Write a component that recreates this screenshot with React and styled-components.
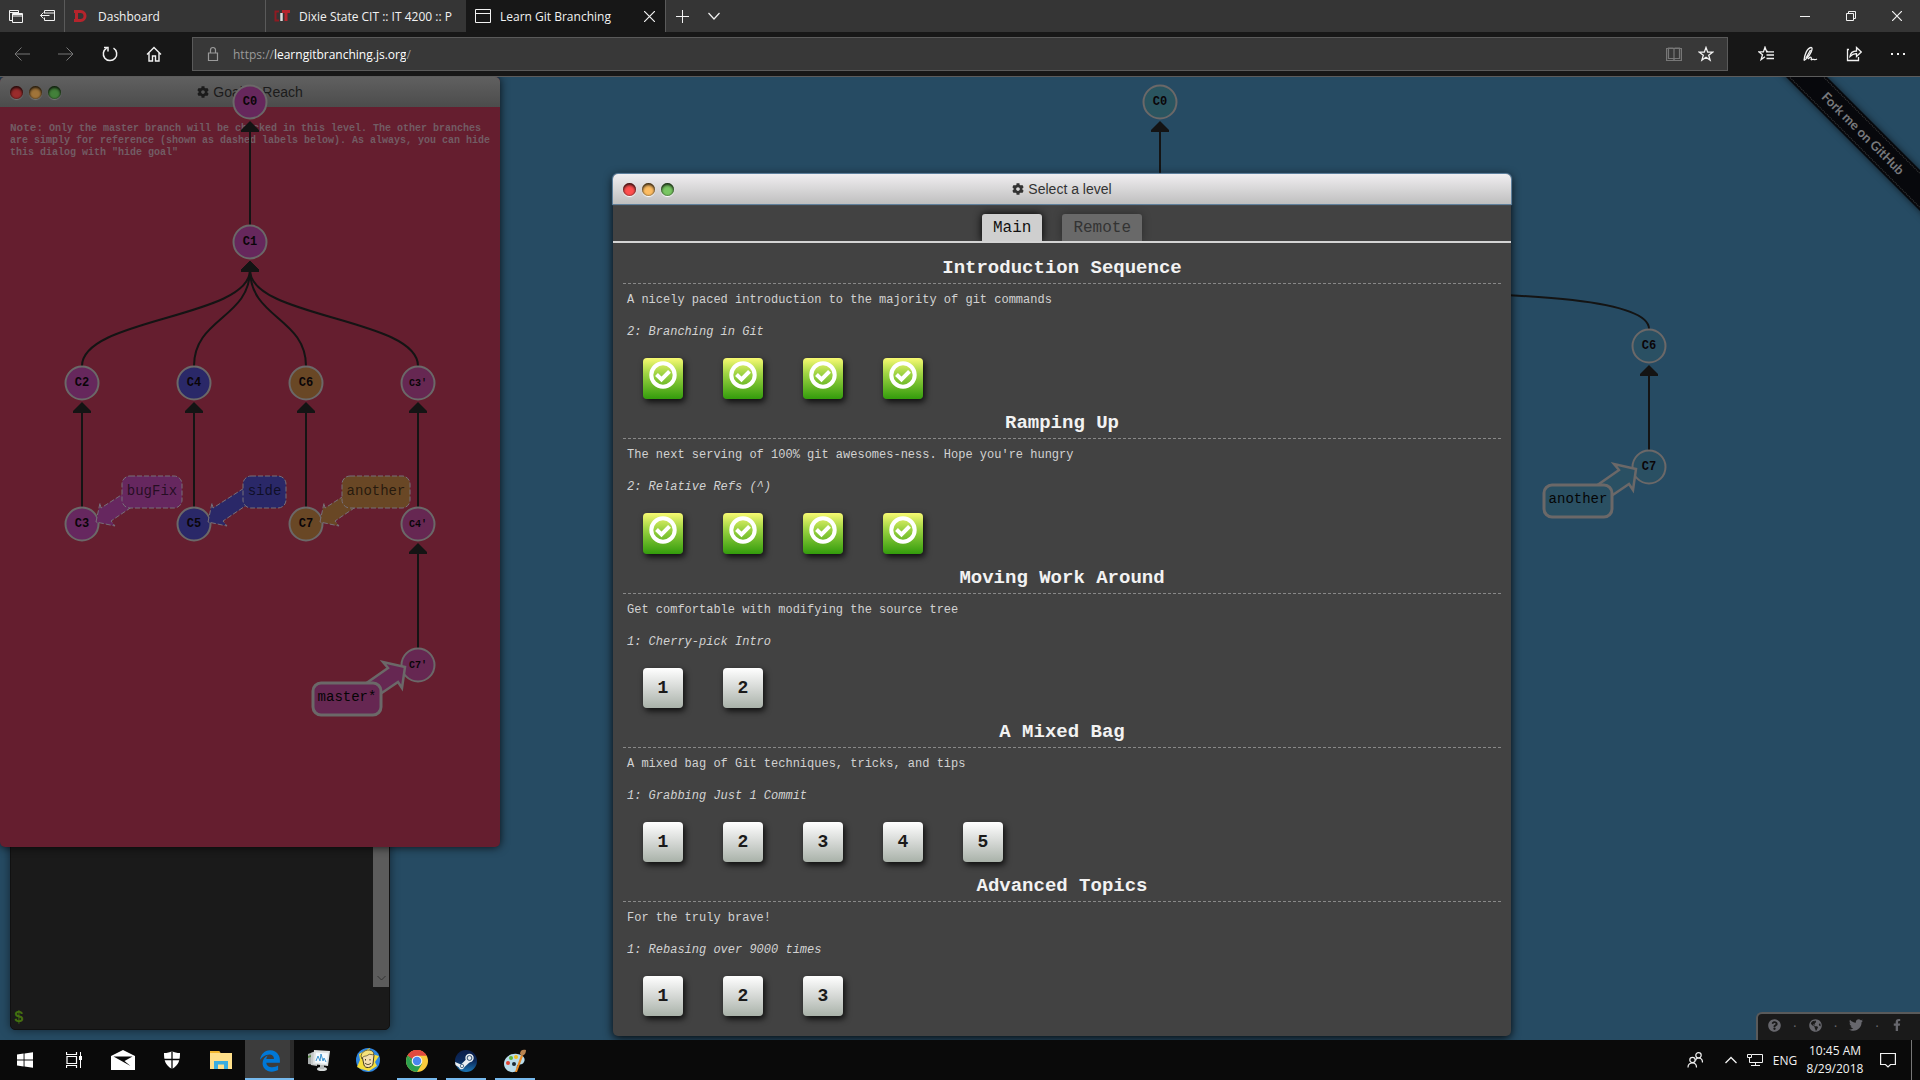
import React from "react";
import styled, { createGlobalStyle, css } from "styled-components";
import {
  FaCog,
  FaEdgeLegacy,
  FaFacebookF,
  FaGlobeAmericas,
  FaQuestionCircle,
  FaTwitter,
} from "react-icons/fa";

const ui = `"Open Sans", "Noto Sans", sans-serif`;
const mono = `"Liberation Mono", "Courier New", monospace`;
const sans = `"Liberation Sans", Arial, sans-serif`;

const GlobalStyle = createGlobalStyle`
  *, *::before, *::after { box-sizing: border-box; }
  body { margin: 0; background: #0a0a0a; }
  button, input { font: inherit; color: inherit; background: none; border: 0; padding: 0; margin: 0; }
  h1, h2, p { margin: 0; }
  svg { display: block; flex: none; }
`;

const Screen = styled.div`
  display: flex;
  flex-direction: column;
  min-height: 100vh;
  font-family: ${ui};
  font-size: 12px;
  color: #f2f2f2;
`;

/* ---------- browser chrome ---------- */

const TabStrip = styled.header`
  display: flex;
  align-items: stretch;
  height: 32px;
  background: #353535;
`;

const IconButton = styled.button`
  display: flex;
  align-items: center;
  justify-content: center;
  width: ${(p) => p.$w || 32}px;
  color: ${(p) => (p.$dim ? "#777" : "#f2f2f2")};
`;

const BrowserTab = styled.div`
  display: flex;
  align-items: center;
  gap: 9px;
  width: ${(p) => (p.$active ? 199 : 201)}px;
  padding: 0 10px 0 8px;
  overflow: hidden;
  white-space: nowrap;
  border-left: 1px solid ${(p) => (p.$active ? "#171717" : "#5a5a5a")};
  background: ${(p) => (p.$active ? "#171717" : "transparent")};
`;

const TabTitle = styled.span`
  flex: 1;
  overflow: hidden;
`;

const StripEnd = styled.div`
  display: flex;
  border-left: 1px solid #5a5a5a;
`;

const WindowButtons = styled.div`
  display: flex;
  margin-left: auto;
`;

const Toolbar = styled.nav`
  display: flex;
  align-items: stretch;
  height: 45px;
  padding: 5px 0;
  background: #171717;
  border-bottom: 1px solid #5c5c5c;
`;

const Address = styled.div`
  display: flex;
  align-items: center;
  flex: 1;
  height: 34px;
  margin: 0 16px;
  padding: 0 5px 0 12px;
  color: #9a9a9a;
  background: #383838;
  border: 1px solid #5a5a5a;
`;

const UrlText = styled.label`
  display: flex;
  align-items: center;
  flex: 1;
  padding-left: 12px;
`;

const UrlInput = styled.input`
  field-sizing: content;
  color: #fff;
  outline: 0;
`;

/* ---------- page ---------- */

const Page = styled.main`
  position: relative;
  flex: 1;
  overflow: hidden;
  background: #264b63;
`;

const TreeCanvas = styled.svg`
  position: absolute;
  inset: 0;
  width: 100%;
  height: 100%;
`;

const Ribbon = styled.a`
  position: absolute;
  top: 42px;
  right: -93px;
  width: 300px;
  height: 29px;
  padding: 2px 0;
  transform: rotate(45deg);
  background: #07080c;
  box-shadow: 0 0 7px rgba(0, 0, 0, 0.6);
  font: bold 13px/23px Lato, ${ui};
  color: #77797c;
  text-align: center;
  text-decoration: none;

  span {
    display: block;
    border: dotted #3c3c3c;
    border-width: 1px 0;
  }
`;

const Terminal = styled.section`
  position: absolute;
  left: 10px;
  bottom: 10px;
  display: flex;
  flex-direction: column;
  width: 380px;
  height: 740px;
  border: 1px solid #111;
  border-radius: 0 0 5px 5px;
  background: #1a1a1a;
  box-shadow: 0 0 10px rgba(0, 0, 0, 0.5);
`;

const Scrollback = styled.div`
  display: flex;
  flex: 1;
  justify-content: flex-end;
`;

const ScrollTrack = styled.div`
  display: flex;
  align-items: flex-end;
  justify-content: center;
  width: 16px;
  padding-bottom: 4px;
  background: #5c5c5c;
`;

const Prompt = styled.label`
  display: flex;
  align-items: center;
  height: 42px;
  padding: 20px 3px 0;
  font: bold 16px/20px ${mono};
  color: #44700f;

  input {
    flex: 1;
    outline: 0;
  }
`;

const GoalWindow = styled.section`
  position: absolute;
  left: 0;
  top: 0;
  width: 500px;
  height: 770px;
  border-radius: 5px;
  background: #651e2f;
  box-shadow: 0 0 10px rgba(0, 0, 0, 0.8);
`;

const GoalNote = styled.p`
  padding: 15px 8px 0 10px;
  font: bold 10px/12px ${mono};
  color: #725c64;

  strong {
    font-size: 11px;
  }
`;

const TitleBar = styled.div`
  display: grid;
  grid-template-columns: 1fr auto 1fr;
  align-items: center;
  height: 30px;
  padding: 0 10px;
  border-radius: 5px 5px 0 0;
  font: 14px/20px ${sans};
  ${(p) =>
    p.$dim
      ? css`
          color: #1b1b1b;
          background: linear-gradient(#606060, #4c4c4c);
        `
      : css`
          color: #333;
          background: linear-gradient(#f0eef0, #bfbfbf);
          box-shadow: 0 0 1px 1px #6488a6;
        `}
`;

const Title = styled.h1`
  display: flex;
  align-items: center;
  gap: 4px;
  font: inherit;
`;

const Lights = styled.div`
  display: flex;
  gap: 6px;
`;

const Light = styled.span`
  width: 13px;
  height: 13px;
  border-radius: 50%;
  background: ${(p) => p.$color};
  box-shadow: inset 0 2px 3px rgba(0, 0, 0, 0.75), inset 0 0 2px rgba(0, 0, 0, 0.7),
    0 1px 1px ${(p) => (p.$dim ? "#777" : "#fff")};
`;

const Backdrop = styled.div`
  position: relative;
  display: flex;
  justify-content: center;
  padding: 97px 0 4px 204px;
`;

const Dialog = styled.section`
  width: 898px;
  max-width: 100%;
  border-radius: 5px;
  background: #424242;
  box-shadow: 0 2px 10px rgba(0, 0, 0, 0.9);
`;

const LevelTabs = styled.div`
  display: flex;
  justify-content: center;
  align-items: flex-end;
  gap: 20px;
  height: 39px;
  overflow: hidden;
  border-bottom: 2px solid #d4d4d4;
`;

const LevelTab = styled.button`
  height: 27px;
  padding: 0 11px;
  border-radius: 3px 3px 0 0;
  font: 16px/29px ${mono};
  color: ${(p) => (p.$active ? "#111" : "#333")};
  background: ${(p) => (p.$active ? "#cfcfcf" : "#696969")};
  box-shadow: 0 0 8px ${(p) => (p.$active ? "#000" : "rgba(0, 0, 0, 0.35)")};
`;

const Sequences = styled.div`
  padding: 12px 10px 9px;
`;

const Sequence = styled.section`
  padding-bottom: 11px;
`;

const SequenceTitle = styled.h2`
  padding-bottom: 2px;
  border-bottom: 1px dashed #888;
  font: bold 19px/26px ${mono};
  color: #f2f2f2;
  text-align: center;
`;

const About = styled.p`
  margin-top: 6px;
  padding-left: 4px;
  font: 12px/20px ${mono};
  color: #d2d2d2;
`;

const Current = styled.p`
  margin-top: 12px;
  padding-left: 4px;
  font: italic 12px/20px ${mono};
  color: #d2d2d2;
`;

const Levels = styled.div`
  display: flex;
  gap: 40px;
  margin-top: 16px;
  padding-left: 20px;
`;

const Level = styled.button`
  display: flex;
  justify-content: center;
  width: 40px;
  border-radius: 4px;
  font: bold 18px/40px ${mono};
  color: #1a1a1a;
  box-shadow: 2px 3px 6px rgba(0, 0, 0, 0.8);
  ${(p) =>
    p.$solved
      ? css`
          height: 41px;
          padding-top: 3px;
          background: linear-gradient(#f8fa72, #9fd443 38%, #339c0c);
        `
      : css`
          height: 40px;
          background: linear-gradient(#fff, #d5d8d5 50%, #a9b2a9);
        `}
`;

const Social = styled.div`
  position: absolute;
  right: 0;
  bottom: 0;
  display: flex;
  align-items: center;
  justify-content: space-between;
  width: 164px;
  height: 28px;
  padding: 0 17px 4px 10px;
  border: solid #5a5a5a;
  border-width: 2px 0 0 2px;
  border-radius: 6px 0 0 0;
  background: #1a1a1a;
  font: 14px/14px ${sans};
  color: #67676d;

  a {
    color: inherit;
  }
`;

/* ---------- taskbar ---------- */

const Taskbar = styled.footer`
  display: flex;
  align-items: stretch;
  height: 40px;
  background: #0a0a0a;
`;

const Task = styled.button`
  display: flex;
  align-items: center;
  justify-content: center;
  width: 49px;
  padding-top: 2px;
  border: solid transparent;
  border-width: 0 4px 2px;
  background-clip: padding-box;
  ${(p) => p.$open && css`background: linear-gradient(#76b9ed, #76b9ed) bottom / 100% 2px no-repeat border-box; border-width: 0; background-size: 40px 2px;`}
  ${(p) => p.$active && css`background: linear-gradient(#76b9ed, #76b9ed) bottom / 100% 2px no-repeat border-box, linear-gradient(90deg, #3c3c3c 45px, #2b2b2b 45px); border-width: 0;`}
`;

const Tray = styled.div`
  display: flex;
  align-items: center;
  margin-left: auto;
  padding-right: 4px;
`;

const Clock = styled.time`
  width: 60px;
  line-height: 18px;
  text-align: center;
  white-space: nowrap;
`;

const Language = styled.span`
  width: 40px;
  text-align: center;
`;

const ShowDesktop = styled.button`
  align-self: stretch;
  width: 5px;
  border-left: 1px solid #777;
`;

/* ---------- icons ---------- */

const Line = ({ size = 16, w = 1, children, ...rest }) => (
  <svg width={size} height={size} viewBox={`0 0 ${size} ${size}`} fill="none" stroke="currentColor" strokeWidth={w} {...rest}>
    {children}
  </svg>
);

const TabsIcon = () => (
  <Line><path d="M4.5 12.5h-3v-10h9v3M1.5 4.5h9M4.5 5.5h10v9h-10zM4.5 8h10" /><path d="M4.5 6.5h10" /></Line>
);
const SetAsideIcon = () => (
  <Line><path d="M4.5 5.500v-3h10v10h-10v-3M4.500 5h10M9.500 7.500h-9M3.500 4.500l-3 3 3 3" /></Line>
);
const BackIcon = () => <Line><path d="M16 8H1M7.500 1.500L1 8l6.500 6.500" /></Line>;
const ForwardIcon = () => <Line><path d="M0 8h15M8.500 1.500L15 8l-6.500 6.500" /></Line>;
const RefreshIcon = () => (
  <Line w={1.500}><path d="M11.500 2.200a6.700 6.700 0 1 1-6.800-.1" /><path d="M2 1.500h4v4" /></Line>
);
const HomeIcon = () => (
  <Line w={1.400}><path d="M1 8.500L8 1.500l7 7M3 7v8h3.500v-5h3v5H13V7" /></Line>
);
const LockIcon = () => (
  <Line w={1.200}><path d="M3.500 7h9v7.500h-9zM5.500 7V4a2.500 2.500 0 0 1 5 0V7" /></Line>
);
const BookIcon = () => (
  <Line w={1.200}><path d="M.600 2.500h14.800v12H.600zM2.500 2h4.500l1 1 1-1h4.500v10.500H9l-1 1-1-1H2.500zM8 3v10.500" /></Line>
);
const StarIcon = () => (
  <Line w={1.300}><path d="M8 1.500l1.700 4.700h4.900l-3.900 3 1.400 4.900L8 11.200l-4.100 2.900 1.400-4.900-3.900-3h4.900z" /></Line>
);
const FavoritesIcon = () => (
  <Line w={1.300}><path d="M10 5.500H8.600L7 1.200 5.400 5.900H.8l3.700 2.900-1.400 4.700L7 10.700M8 5.900h8M8.500 9h7.500M8.500 12.500H16" /></Line>
);
const PenIcon = () => (
  <Line w={1.300}><path d="M2 14.500C2.500 9 5 2 9 1.500c3 0-1 8-4.500 11L2 14.500M8.500 4L4 12M6 13c3-3 4-2 3 1 2-2 3 1 6-1" /></Line>
);
const ShareIcon = () => (
  <Line w={1.300}><path d="M3 3.500H1.500v11h11V11M4 10.500C4.500 6.500 7 5 10.500 5V1.500L15.200 6l-4.700 4.500V7.700C8 7.500 6 8.500 4 10.500z" /></Line>
);
const MoreIcon = () => (
  <svg width="16" height="16" fill="currentColor"><path d="M1 7h2v2H1zM7 7h2v2H7zM13 7h2v2h-2z" /></svg>
);
const CloseIcon = ({ size = 10 }) => <Line size={size} w={1.200}><path d={`M0 0l${size} ${size}M${size} 0L0 ${size}`} /></Line>;
const PlusIcon = () => <Line size={13}><path d="M6.500 0v13M0 6.500h13" /></Line>;
const ChevronIcon = () => <Line size={12} w={1.200}><path d="M0.500 3l5.500 6 5.500-6" /></Line>;
const MinimizeIcon = () => <Line size={10}><path d="M0 5.500h10" /></Line>;
const RestoreIcon = () => <Line size={10}><path d="M.5 2.500h7v7h-7zM2.500 2.500v-2h7v7h-2" /></Line>;
const PageIcon = () => <Line><path d="M.5 1.500h15v13H.5zM.5 5.500h15" /></Line>;
const DIcon = () => (
  <svg width="16" height="16" fill="none" stroke="#b5242c"><path d="M3.500 4v8M1 3.500h6.500c6 0 6 9 0 9H1" strokeWidth="3" /></svg>
);
const CitIcon = () => (
  <svg width="16" height="16" fill="none" strokeWidth="2"><path d="M5 3.500H1.500v9H5" stroke="#8e1b22" /><path d="M7.500 5v8" stroke="#ddd" strokeWidth="2.500" /><path d="M8 3.500h8M12 3.500V13" stroke="#b5242c" strokeWidth="3" /></svg>
);
const CheckIcon = () => (
  <svg width="28" height="28" viewBox="0 0 28 28" fill="none" stroke="#fff">
    <circle cx="14" cy="14" r="11.700" strokeWidth="4" />
    <path d="M7.500 13.500l5 5 8-8.200" strokeWidth="4" />
  </svg>
);

const WindowsIcon = () => (
  <svg width="16" height="16" fill="#fff"><path d="M0 2.400l6.600-.9v6H0zM7.500 1.400L16 .2v7.300H7.500zM0 8.500h6.600v6L0 13.600zM7.500 8.500H16v7.300l-8.500-1.200z" /></svg>
);
const TaskViewIcon = () => (
  <svg width="16" height="16" fill="none" stroke="#fff"><path d="M.5 0v2.500h10V0M.5 16v-2.500h10V16M1 4.500h9.500v7H1z" strokeWidth="1.200" /><path d="M14.500 0v16" /><path d="M13 4h3v4h-3z" fill="#fff" stroke="none" /></svg>
);
const MailIcon = () => (
  <svg width="24" height="20"><path d="M0 6L12 0l12 6v14H0z" fill="#fff" /><path d="M2.500 6.500h19L13.500 11l6 5L2.500 6.500z" fill="#0a0a0a" /></svg>
);
const ShieldIcon = () => (
  <svg width="18" height="18"><path d="M9 0c2 1.500 5 2 8 2 0 7-1 12-8 16C2 14 1 9 1 2c3 0 6-.5 8-2z" fill="#fff" /><path d="M9 0v18M1 8.500h16" stroke="#0a0a0a" strokeWidth="1.300" /></svg>
);
const FolderIcon = () => (
  <svg width="22" height="20"><path d="M0 1h9l1.500 2H22v16H0z" fill="#ffe08a" /><path d="M0 1h9l1.500 2H0z" fill="#f3b830" /><path d="M4 19v-8h14v8h-4v-4.500H8V19z" fill="#3aaee0" /></svg>
);
const MonitorIcon = () => (
  <svg width="24" height="24"><path d="M1 6l8-3v14l-8-1z" fill="#a9adad" /><path d="M4 5l6-2v15l-6-1z" fill="#c6caca" /><path d="M1 8l3-1v2l-3 1z" fill="#5a8a4a" /><path d="M7 2l16 1-2 15-15-2z" fill="#dfe3e3" /><path d="M9 4.500l12 .800-1.500 10.700-11.500-1.500z" fill="#f5fbff" /><path d="M9 13l2-5 2 5 1-7 2 7 1-3 2 4" fill="none" stroke="#3d94cf" /><ellipse cx="15" cy="21" rx="5" ry="2" fill="#d5d9d9" /><path d="M13 17h4v4h-4z" fill="#b5b9b9" /></svg>
);
const VaultIcon = () => (
  <svg width="24" height="24"><circle cx="12" cy="12" r="12" fill="#2f86e0" /><path d="M14 0l-2 5 11 3-4 6 2 4-8 5-8-2-4-2 3-7L3 6z" fill="#f5de3c" /><path d="M6 8c2-5 10-5 12-1l-1 9c-1 4-8 5-9 1z" fill="#f4dfb0" stroke="#433a20" /><path d="M5 8c1-7 12-8 13-2-2 2-4-1-6 1s-5 0-6 4z" fill="#f7e27a" stroke="#433a20" strokeWidth=".7" /><path d="M9 15c2 2 4 2 6 0M9.500 11v1.500M14 11v1.500" stroke="#433a20" fill="none" /></svg>
);
const ChromeIcon = () => (
  <svg width="22" height="22" viewBox="0 0 22 22"><circle cx="11" cy="11" r="11" fill="#f9cb3c" /><path d="M11 11L1.500 5.500A11 11 0 0 1 20.500 5.500H11z" fill="#e04a3f" /><path d="M1.500 5.500A11 11 0 0 0 11 22l5-8.300L11 11 6.300 13.600z" fill="#2ca04f" /><path d="M1.500 5.500L6.300 13.700 9 6z" fill="#2ca04f" /><path d="M1.500 5.500A11 11 0 0 1 20.500 5.500H11L6.500 9z" fill="#e04a3f" /><circle cx="11" cy="11" r="5.300" fill="#f4f4f4" /><circle cx="11" cy="11" r="4.200" fill="#4a86ee" /></svg>
);
const SteamIcon = () => (
  <svg width="22" height="22" viewBox="0 0 22 22">
    <defs><linearGradient id="steam" x2="0" y2="1"><stop stopColor="#0a1d4a" /><stop offset=".5" stopColor="#0b2a5c" /><stop offset="1" stopColor="#1a76b5" /></linearGradient></defs>
    <circle cx="11" cy="11" r="11" fill="url(#steam)" /><path d="M0 12l6 2.500 6-6 3 3.500-5.500 5c-1 3-5 3-5.500.5L.5 15z" fill="#e9eef2" /><circle cx="14.500" cy="8" r="4.200" fill="#e9eef2" /><circle cx="14.500" cy="8" r="2.400" fill="none" stroke="#2b4b70" /><circle cx="7" cy="16" r="1.700" fill="none" stroke="#5a7690" />
  </svg>
);
const PaintIcon = () => (
  <svg width="24" height="24"><path d="M1 15C1 8 8 4 14 5s9 4 7 8-6 1-7 4 2 5-3 6S1 20 1 15z" fill="#b9dcec" /><circle cx="8" cy="9" r="2" fill="#5db53b" /><circle cx="13" cy="8" r="2" fill="#f0c020" /><circle cx="5" cy="14" r="2" fill="#df4332" /><circle cx="11" cy="15" r="2" fill="#1c2a36" /><path d="M12 23l6-17 2 1-6 16z" fill="#e98a24" /><path d="M17 5c0-4 3-5 6-4 0 3-1 5-4 6z" fill="#b98450" /></svg>
);
const PeopleIcon = () => (
  <Line w={1.200}><circle cx="5.500" cy="8" r="2.700" /><path d="M1 15.500c0-3 2-4.500 4.500-4.500s4 2 4 4.500M8.500 8.500C9 6.500 10 6 11.500 6S15.500 7 15.500 10.500" /><circle cx="11.500" cy="3.300" r="2.700" /></Line>
);
const UpIcon = () => <Line size={12} w={1.300}><path d="M.5 9L6 3.500 11.500 9" /></Line>;
const NetworkIcon = () => (
  <Line><path d="M5 2.500h10.500v8h-13V7M8.500 10.500v3M4 13.500h9M.5 2.500h4v3h-4zM2.500 5.500v3" /></Line>
);
const NoticeIcon = () => <Line w={1.200}><path d="M.6 1.500h14.800v11H10.500L8 15l-2.500-2.500H.6z" /></Line>;

/* ---------- commit trees ---------- */

const INK = "#141414";
const RING = "#6b6868";

const Commit = ({ x, y, fill, id, color = "#0a0508" }) => (
  <g>
    <circle cx={x} cy={y} r="16.500" fill={fill} stroke={RING} strokeWidth="2" />
    <text x={x} y={y + 3} textAnchor="middle" fontFamily={mono} fontWeight="bold" fontSize={id.length > 2 ? 10 : 12} fill={color}>{id}</text>
  </g>
);

const ArrowHead = ({ x, y }) => <path d={`M${x} ${y + 19}l9 9v2h-18v-2z`} fill={INK} />;

const Edge = ({ from, to, bend = 48 }) => {
  const [x1, y1] = from;
  const [x2, y2] = to;
  const top = y2 + 28;
  const bottom = y1 - 17;
  const pull = x1 === x2 ? 0 : bend;
  return (
    <g>
      <path d={`M${x1} ${bottom}C${x1} ${bottom - pull} ${x2} ${top + pull} ${x2} ${top}`} fill="none" stroke={INK} strokeWidth="2" />
      <ArrowHead x={x2} y={y2} />
    </g>
  );
};

/* Branch tag hanging to the lower left of its commit. */
const HeadTag = ({ x, y, name, fill }) => (
  <g transform={`translate(${x} ${y})`}>
    <path d="M-13 2L-35-3L-30 3L-60 24L-48 36L-20 17L-16 23z" fill={fill} stroke={RING} strokeWidth="2.500" />
    <rect x="-105" y="18" width="68" height="32" rx="8" fill={fill} stroke={RING} strokeWidth="3" />
    <text x="-71" y="36" textAnchor="middle" fontFamily={mono} fontSize="14" fill="#050505">{name}</text>
  </g>
);

/* Dashed reference label to the upper right of its commit. */
const RefTag = ({ x, y, left, width, name, fill }) => (
  <g transform={`translate(${x} ${y})`} strokeDasharray="5 2" stroke="#777079">
    <path d="M14-2L18-21L19-16L69-48V-30L29-3L33 2z" fill={fill} />
    <rect x={left} y="-48" width={width} height="32" rx="8" fill={fill} />
    <text x={left + width / 2} y="-29" textAnchor="middle" fontFamily={mono} fontSize="14" fill="#000" fillOpacity=".65" stroke="none">{name}</text>
  </g>
);

const PURPLE = "#66275c";
const BLUE = "#2a2868";
const GOLD = "#694725";
const SEA = "#2a5063";

const ROW = [25, 165, 306, 447, 588];

const GoalTree = () => (
  <TreeCanvas viewBox="0 0 500 770" preserveAspectRatio="xMidYMin meet" role="img" aria-label="Goal tree">
    <Edge from={[250, ROW[1]]} to={[250, ROW[0]]} />
    {[82, 194, 306, 418].map((x) => (
      <g key={x}>
        <Edge from={[x, ROW[2]]} to={[250, ROW[1]]} />
        <Edge from={[x, ROW[3]]} to={[x, ROW[2]]} />
      </g>
    ))}
    <Edge from={[418, ROW[4]]} to={[418, ROW[3]]} />
    <Commit x={250} y={ROW[0]} id="C0" fill={PURPLE} />
    <Commit x={250} y={ROW[1]} id="C1" fill={PURPLE} />
    <Commit x={82} y={ROW[2]} id="C2" fill={PURPLE} />
    <Commit x={194} y={ROW[2]} id="C4" fill={BLUE} />
    <Commit x={306} y={ROW[2]} id="C6" fill={GOLD} />
    <Commit x={418} y={ROW[2]} id="C3'" fill="#662752" />
    <Commit x={82} y={ROW[3]} id="C3" fill="#66275f" />
    <Commit x={194} y={ROW[3]} id="C5" fill={BLUE} />
    <Commit x={306} y={ROW[3]} id="C7" fill={GOLD} />
    <Commit x={418} y={ROW[3]} id="C4'" fill="#662752" />
    <Commit x={418} y={ROW[4]} id="C7'" fill="#662752" />
    <RefTag x={82} y={ROW[3]} left={40} width={60} name="bugFix" fill="#66275f" />
    <RefTag x={194} y={ROW[3]} left={49} width={43} name="side" fill={BLUE} />
    <RefTag x={306} y={ROW[3]} left={36} width={68} name="another" fill={GOLD} />
    <HeadTag x={418} y={ROW[4]} name="master*" fill="#662752" />
  </TreeCanvas>
);

const MainTree = () => (
  <TreeCanvas viewBox="0 0 1920 963" preserveAspectRatio="xMidYMin meet" role="img" aria-label="Commit tree">
    <Edge from={[1160, 147]} to={[1160, 25]} />
    <Edge from={[1649, 269]} to={[1160, 147]} bend={60} />
    <Edge from={[1649, 390]} to={[1649, 269]} />
    <Commit x={1160} y={25} id="C0" fill="#2a5560" />
    <Commit x={1649} y={269} id="C6" fill={SEA} />
    <Commit x={1649} y={390} id="C7" fill={SEA} />
    <HeadTag x={1649} y={390} name="another" fill={SEA} />
  </TreeCanvas>
);

/* ---------- content ---------- */

const SEQUENCES = [
  { title: "Introduction Sequence", about: "A nicely paced introduction to the majority of git commands", current: "2: Branching in Git", levels: 4, solved: true },
  { title: "Ramping Up", about: "The next serving of 100% git awesomes-ness. Hope you're hungry", current: "2: Relative Refs (^)", levels: 4, solved: true },
  { title: "Moving Work Around", about: "Get comfortable with modifying the source tree", current: "1: Cherry-pick Intro", levels: 2 },
  { title: "A Mixed Bag", about: "A mixed bag of Git techniques, tricks, and tips", current: "1: Grabbing Just 1 Commit", levels: 5 },
  { title: "Advanced Topics", about: "For the truly brave!", current: "1: Rebasing over 9000 times", levels: 3 },
];

const TASKS = [
  ["Start", WindowsIcon],
  ["Task View", TaskViewIcon],
  ["Mail", MailIcon],
  ["Defender", ShieldIcon],
  ["File Explorer", FolderIcon],
  ["Edge", () => <FaEdgeLegacy size={22} color="#0078d7" />, "active"],
  ["Resource Monitor", MonitorIcon],
  ["Fallout", VaultIcon],
  ["Chrome", ChromeIcon, "open"],
  ["Steam", SteamIcon, "open"],
  ["Paint", PaintIcon, "open"],
];

const WindowTitle = ({ dim, children }) => (
  <TitleBar $dim={dim}>
    <Lights>
      {(dim ? ["#9a2c2c", "#a0743a", "#43803a"] : ["#ff4f4f", "#fdbd63", "#79c763"]).map((c) => (
        <Light key={c} $color={c} $dim={dim} />
      ))}
    </Lights>
    <Title><FaCog size={12} />{children}</Title>
  </TitleBar>
);

export default function App() {
  return (
    <Screen>
      <GlobalStyle />
      <TabStrip>
        <IconButton aria-label="Tabs set aside"><TabsIcon /></IconButton>
        <IconButton aria-label="Set tabs aside"><SetAsideIcon /></IconButton>
        <BrowserTab><DIcon /><TabTitle>Dashboard</TabTitle></BrowserTab>
        <BrowserTab><CitIcon /><TabTitle>Dixie State CIT :: IT 4200 :: P</TabTitle></BrowserTab>
        <BrowserTab $active>
          <PageIcon /><TabTitle>Learn Git Branching</TabTitle>
          <IconButton $w={12} aria-label="Close tab"><CloseIcon size={11} /></IconButton>
        </BrowserTab>
        <StripEnd>
          <IconButton aria-label="New tab"><PlusIcon /></IconButton>
          <IconButton aria-label="Tab previews"><ChevronIcon /></IconButton>
        </StripEnd>
        <WindowButtons>
          <IconButton $w={46} aria-label="Minimize"><MinimizeIcon /></IconButton>
          <IconButton $w={46} aria-label="Restore"><RestoreIcon /></IconButton>
          <IconButton $w={46} aria-label="Close"><CloseIcon /></IconButton>
        </WindowButtons>
      </TabStrip>

      <Toolbar>
        <IconButton $w={44} $dim aria-label="Back"><BackIcon /></IconButton>
        <IconButton $w={44} $dim aria-label="Forward"><ForwardIcon /></IconButton>
        <IconButton $w={44} aria-label="Refresh"><RefreshIcon /></IconButton>
        <IconButton $w={44} aria-label="Home"><HomeIcon /></IconButton>
        <Address>
          <LockIcon />
          <UrlText>
            https://<UrlInput aria-label="Address" defaultValue="learngitbranching.js.org" />/
          </UrlText>
          <IconButton $dim aria-label="Reading view"><BookIcon /></IconButton>
          <IconButton aria-label="Add to favorites"><StarIcon /></IconButton>
        </Address>
        <IconButton $w={44} aria-label="Favorites"><FavoritesIcon /></IconButton>
        <IconButton $w={44} aria-label="Add notes"><PenIcon /></IconButton>
        <IconButton $w={44} aria-label="Share"><ShareIcon /></IconButton>
        <IconButton $w={44} aria-label="More"><MoreIcon /></IconButton>
      </Toolbar>

      <Page>
        <MainTree />
        <Ribbon href="#fork"><span>Fork me on GitHub</span></Ribbon>
        <Terminal>
          <Scrollback>
            <ScrollTrack><Line size={9} color="#333"><path d="M.5 2l4 4 4-4" /></Line></ScrollTrack>
          </Scrollback>
          <Prompt>$<input aria-label="Command" /></Prompt>
        </Terminal>
        <GoalWindow>
          <WindowTitle dim>Goal to Reach</WindowTitle>
          <GoalNote>
            <strong>Note:</strong> Only the master branch will be checked in this level. The other branches are
            simply for reference (shown as dashed labels below). As always, you can hide this dialog with "hide goal"
          </GoalNote>
          <GoalTree />
        </GoalWindow>
        <Social>
          <a href="#help" aria-label="Help"><FaQuestionCircle size={13} /></a>·
          <a href="#language" aria-label="Language"><FaGlobeAmericas size={13} /></a>·
          <a href="#twitter" aria-label="Twitter"><FaTwitter size={14} /></a>·
          <a href="#facebook" aria-label="Facebook"><FaFacebookF size={12} /></a>
        </Social>
        <Backdrop>
          <Dialog role="dialog" aria-label="Select a level">
            <WindowTitle>Select a level</WindowTitle>
            <LevelTabs role="tablist">
              <LevelTab role="tab" $active>Main</LevelTab>
              <LevelTab role="tab">Remote</LevelTab>
            </LevelTabs>
            <Sequences>
              {SEQUENCES.map((s) => (
                <Sequence key={s.title}>
                  <SequenceTitle>{s.title}</SequenceTitle>
                  <About>{s.about}</About>
                  <Current>{s.current}</Current>
                  <Levels>
                    {Array.from({ length: s.levels }, (_, i) => (
                      <Level key={i} $solved={s.solved} aria-label={`Level ${i + 1}`}>
                        {s.solved ? <CheckIcon /> : i + 1}
                      </Level>
                    ))}
                  </Levels>
                </Sequence>
              ))}
            </Sequences>
          </Dialog>
        </Backdrop>
      </Page>

      <Taskbar>
        {TASKS.map(([name, Icon, state]) => (
          <Task key={name} aria-label={name} $active={state === "active"} $open={state === "open"}><Icon /></Task>
        ))}
        <Tray>
          <IconButton $w={44} aria-label="People"><PeopleIcon /></IconButton>
          <IconButton $w={28} aria-label="Show hidden icons"><UpIcon /></IconButton>
          <IconButton $w={20} aria-label="Network"><NetworkIcon /></IconButton>
          <Language>ENG</Language>
          <Clock>10:45 AM<br />8/29/2018</Clock>
          <IconButton $w={46} aria-label="Notifications"><NoticeIcon /></IconButton>
          <ShowDesktop aria-label="Show desktop" />
        </Tray>
      </Taskbar>
    </Screen>
  );
}
